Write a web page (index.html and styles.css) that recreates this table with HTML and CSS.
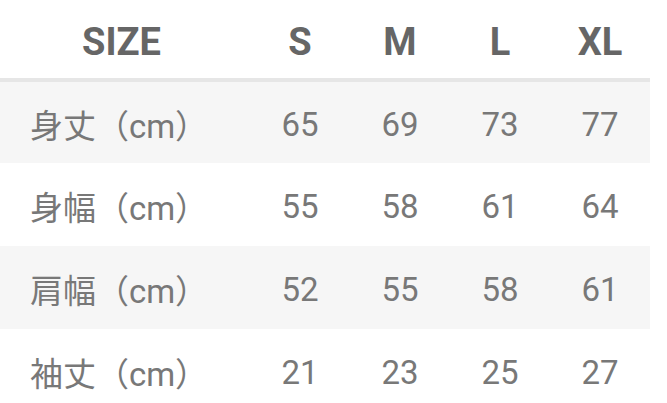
FILE: index.html
```html
<!DOCTYPE html>
<html lang="ja">
<head>
<meta charset="utf-8">
<link rel="stylesheet" href="styles.css">
</head>
<body>
<table class="size-table">
  <thead>
    <tr>
      <th class="label-col">SIZE</th>
      <th>S</th>
      <th>M</th>
      <th>L</th>
      <th>XL</th>
    </tr>
  </thead>
  <tbody>
    <tr class="alt">
      <td class="label-col">身丈（cm）</td>
      <td>65</td><td>69</td><td>73</td><td>77</td>
    </tr>
    <tr>
      <td class="label-col">身幅（cm）</td>
      <td>55</td><td>58</td><td>61</td><td>64</td>
    </tr>
    <tr class="alt">
      <td class="label-col">肩幅（cm）</td>
      <td>52</td><td>55</td><td>58</td><td>61</td>
    </tr>
    <tr>
      <td class="label-col">袖丈（cm）</td>
      <td>21</td><td>23</td><td>25</td><td>27</td>
    </tr>
  </tbody>
</table>
</body>
</html>
```

FILE: styles.css
```css
html, body {
  margin: 0;
  padding: 0;
  background: #ffffff;
}

.size-table {
  width: 650px;
  border-collapse: collapse;
  table-layout: fixed;
  font-family: Roboto, "Noto Sans CJK JP", sans-serif;
  color: #787878;
}

.size-table th,
.size-table td {
  padding: 0;
  text-align: center;
  width: 100px;
  box-sizing: border-box;
}

.size-table .label-col {
  width: 250px;
}

.size-table thead tr {
  height: 80px;
  border-bottom: 4px solid #e6e6e6;
}

.size-table th {
  font-size: 38px;
  font-weight: 700;
  color: #666666;
  padding-top: 6px;
}

.size-table th.label-col {
  padding-right: 7px;
}

.size-table tbody tr {
  height: 83px;
}

.size-table td {
  font-size: 33px;
  font-weight: 400;
  padding-top: 3px;
}

.size-table td.label-col {
  padding-right: 12px;
}

.size-table tr.alt {
  background: #f6f6f6;
}
```
